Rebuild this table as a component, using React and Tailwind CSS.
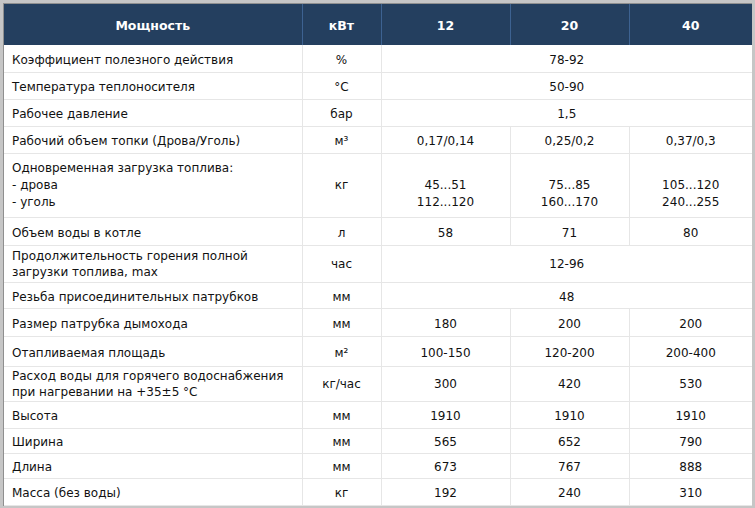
const rows = [
  { h: 'h-[27px]', name: 'Коэффициент полезного действия', unit: '%', span: '78-92' },
  { h: 'h-[27px]', name: 'Температура теплоносителя', unit: '°C', span: '50-90' },
  { h: 'h-[27px]', name: 'Рабочее давление', unit: 'бар', span: '1,5' },
  { h: 'h-[27px]', name: 'Рабочий объем топки (Дрова/Уголь)', unit: 'м³', vals: ['0,17/0,14', '0,25/0,2', '0,37/0,3'] },
  {
    h: 'h-[64px]',
    name: ['Одновременная загрузка топлива:', '- дрова', '- уголь'],
    unit: 'кг',
    vals: [['', '45...51', '112...120'], ['', '75...85', '160...170'], ['', '105...120', '240...255']],
  },
  { h: 'h-[28px]', name: 'Объем воды в котле', unit: 'л', vals: ['58', '71', '80'] },
  { h: 'h-[37px]', name: ['Продолжительность горения полной', 'загрузки топлива, max'], unit: 'час', span: '12-96' },
  { h: 'h-[26px]', name: 'Резьба присоединительных патрубков', unit: 'мм', span: '48' },
  { h: 'h-[28px]', name: 'Размер патрубка дымохода', unit: 'мм', vals: ['180', '200', '200'] },
  { h: 'h-[30px]', name: 'Отапливаемая площадь', unit: 'м²', vals: ['100-150', '120-200', '200-400'] },
  { h: 'h-[35px]', name: ['Расход воды для горячего водоснабжения', 'при нагревании на +35±5 °C'], unit: 'кг/час', vals: ['300', '420', '530'] },
  { h: 'h-[27px]', name: 'Высота', unit: 'мм', vals: ['1910', '1910', '1910'] },
  { h: 'h-[25px]', name: 'Ширина', unit: 'мм', vals: ['565', '652', '790'] },
  { h: 'h-[25px]', name: 'Длина', unit: 'мм', vals: ['673', '767', '888'] },
  { h: 'h-[27px]', name: 'Масса (без воды)', unit: 'кг', vals: ['192', '240', '310'] },
];

// многострочный текст ячейки
function Lines({ text }) {
  if (!Array.isArray(text)) return text;
  const lh = text.length > 2 ? 'h-[17px] leading-[17px]' : 'h-[16px] leading-[16px]';
  return text.map((t, i) => (
    <div key={i} className={lh}>{t}</div>
  ));
}

export default function App() {
  return (
    <div className="w-[755px] h-[508px] overflow-hidden bg-white font-['DejaVu_Sans',sans-serif] text-[12px] text-[#111]">
      <div className="w-[755px] h-[508px] border-l-[3px] border-t-[3px] border-r-[3px] border-b-[2px] border-[#c6c6c6]">
        <div className="border-l border-t border-[#8f8f8f] h-full">
          <table className="table-fixed border-collapse w-[748px]">
            <colgroup>
              <col className="w-[298px]" />
              <col className="w-[79px]" />
              <col className="w-[129px]" />
              <col className="w-[119px]" />
              <col className="w-[123px]" />
            </colgroup>
            <thead>
              <tr className="h-[41px] bg-[#243f5f] text-white font-bold text-[12.5px] leading-[16px]">
                <th className="pt-[3px] border-r border-[#3d6291]">Мощность</th>
                <th className="pt-[3px] border-r border-[#3d6291]">кВт</th>
                <th className="pt-[3px] border-r border-[#3d6291]">12</th>
                <th className="pt-[3px] border-r border-[#3d6291]">20</th>
                <th className="pt-[3px]">40</th>
              </tr>
            </thead>
            <tbody>
              {rows.map((r, i) => {
                const multi = Array.isArray(r.name);
                const pad = multi ? '' : 'pt-[3px]';
                return (
                  <tr key={i} className={`${r.h} border-b border-[#e6e6e6] leading-[16px]`}>
                    <td className={`${pad} pl-[8px] border-r border-[#e6e6e6] whitespace-nowrap`}>
                      <Lines text={r.name} />
                    </td>
                    <td className={`${pad} text-center border-r border-[#e6e6e6]`}>{r.unit}</td>
                    {r.span ? (
                      <td colSpan={3} className={`${pad} text-center`}>{r.span}</td>
                    ) : (
                      r.vals.map((v, j) => (
                        <td key={j} className={`${pad} text-center ${j < 2 ? 'border-r border-[#e6e6e6]' : ''}`}>
                          <Lines text={v} />
                        </td>
                      ))
                    )}
                  </tr>
                );
              })}
            </tbody>
          </table>
        </div>
      </div>
    </div>
  );
}
